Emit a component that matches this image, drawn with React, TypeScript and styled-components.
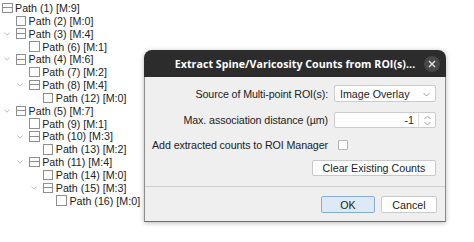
import React from 'react'
import styled, { createGlobalStyle } from 'styled-components'

const GlobalStyle = createGlobalStyle`
  html, body {
    margin: 0;
    padding: 0;
    background: #ffffff;
  }

  body {
    font-family: 'Liberation Sans', Arial, sans-serif;
    font-size: 10.7px;
    color: #222;
    width: 474px;
    height: 242px;
    overflow: hidden;
  }
`

const Page = styled.div`
  position: relative;
  width: 474px;
  height: 242px;
`

const Tree = styled.ul`
  list-style: none;
  margin: 0;
  padding: 1.6px 0 0 2px;
`

const TreeRow = styled.li<{ $level: number }>`
  position: relative;
  display: flex;
  align-items: center;
  gap: 2.5px;
  height: 12.85px;
  padding-left: ${p => p.$level * 13.6}px;
  white-space: nowrap;
`

const Toggle = styled.svg`
  position: absolute;
  top: 4.5px;
  width: 6px;
  height: 4px;
  margin-left: -12px;
`

const NodeBox = styled.span<{ $open: boolean }>`
  position: relative;
  box-sizing: border-box;
  width: 10.5px;
  height: 10.5px;
  border: 1px solid #8e8e8e;
  background: #fff;

  &::after {
    content: '';
    display: ${p => (p.$open ? 'block' : 'none')};
    position: absolute;
    left: 0;
    right: 0;
    top: 3.5px;
    height: 1px;
    background: #8e8e8e;
  }
`

const Dialog = styled.div`
  position: absolute;
  left: 144px;
  top: 50px;
  width: 302px;
  height: 172px;
  display: flex;
  flex-direction: column;
  border-radius: 8px 8px 0 0;
  box-shadow: 0 1px 5px rgba(0, 0, 0, 0.28);
`

const TitleBar = styled.div`
  position: relative;
  height: 27px;
  flex: none;
  display: flex;
  align-items: center;
  justify-content: center;
  background: #2c2c2c;
  border-radius: 8px 8px 0 0;
  color: #fff;
  font-family: 'Open Sans', 'Noto Sans', sans-serif;
  font-weight: 700;
  font-size: 10.6px;
  letter-spacing: 0.05px;
`

const CloseButton = styled.span`
  position: absolute;
  right: 6px;
  top: 6px;
  width: 16px;
  height: 16px;
  border-radius: 50%;
  background: #474747;
  display: flex;
  align-items: center;
  justify-content: center;
`

const Body = styled.div`
  flex: 1;
  display: flex;
  flex-direction: column;
  background: #efefef;
  border: 1px solid #8c8c8c;
  border-top: none;
  border-bottom-color: #6e6e6e;
`

const Form = styled.div`
  display: grid;
  grid-template-columns: 1fr 102px;
  grid-template-rows: 17px 26px 25px 23px;
  column-gap: 6px;
  align-items: end;
  padding: 8px 9px 10px 4px;
  border-bottom: 1px solid #cdcdcd;
`

const Label = styled.span`
  text-align: right;
  white-space: nowrap;
  line-height: 16px;
  letter-spacing: -0.1px;
`

const Field = styled.div<{ $h: number }>`
  box-sizing: border-box;
  height: ${p => p.$h}px;
  display: flex;
  align-items: center;
  background: #fff;
  border: 1px solid #cbcbcb;
  border-radius: 2px;
`

const ComboText = styled.span`
  flex: 1;
  padding-left: 5px;
`

const SpinText = styled.span`
  flex: 1;
  text-align: right;
  padding-right: 4px;
`

const SpinArrows = styled.span`
  width: 16px;
  height: 100%;
  display: flex;
  align-items: center;
  justify-content: center;
  border-left: 1px solid #dcdcdc;
`

const CheckBox = styled.span`
  box-sizing: border-box;
  width: 10px;
  height: 10px;
  margin: 0 0 3px 4px;
  background: #fff;
  border: 1px solid #b4b4b4;
  border-radius: 1px;
`

const Button = styled.button<{ $primary?: boolean; $w: number }>`
  box-sizing: border-box;
  width: ${p => p.$w}px;
  height: 17px;
  padding: 0;
  font-family: 'Liberation Sans', Arial, sans-serif;
  font-size: 10.7px;
  color: #222;
  background: ${p => (p.$primary ? '#dce9f6' : '#fff')};
  border: 1px solid ${p => (p.$primary ? '#86aed4' : '#c9c9c9')};
  border-radius: 2px;
`

const ClearButton = styled(Button)`
  grid-column: 1 / 3;
  justify-self: end;
  height: 16px;
`

const Footer = styled.div`
  display: flex;
  justify-content: flex-end;
  gap: 6px;
  padding: 9px 8px 0 0;
`

interface Node {
  id: number
  marks: number
  level: number
  open?: boolean
}

const nodes: Node[] = [
  { id: 1, marks: 9, level: 0, open: true },
  { id: 2, marks: 0, level: 1 },
  { id: 3, marks: 4, level: 1, open: true },
  { id: 6, marks: 1, level: 2 },
  { id: 4, marks: 6, level: 1, open: true },
  { id: 7, marks: 2, level: 2 },
  { id: 8, marks: 4, level: 2, open: true },
  { id: 12, marks: 0, level: 3 },
  { id: 5, marks: 7, level: 1, open: true },
  { id: 9, marks: 1, level: 2 },
  { id: 10, marks: 3, level: 2, open: true },
  { id: 13, marks: 2, level: 3 },
  { id: 11, marks: 4, level: 2, open: true },
  { id: 14, marks: 0, level: 3 },
  { id: 15, marks: 3, level: 3, open: true },
  { id: 16, marks: 0, level: 4 },
]

const Chevron: React.FC<{ color: string }> = ({ color }) => (
  <svg width="7" height="5" viewBox="0 0 7 5">
    <polyline points="0.5,1 3.5,4 6.5,1" fill="none" stroke={color} strokeWidth="1" />
  </svg>
)

const App: React.FC = () => {
  return (
    <Page>
      <GlobalStyle />
      <Tree>
        {nodes.map(n => (
          <TreeRow key={n.id} $level={n.level}>
            {n.open && n.level > 0 && (
              <Toggle viewBox="0 0 6 4">
                <polyline points="0.5,0.5 3,3.2 5.5,0.5" fill="none" stroke="#bdbdbd" strokeWidth="1" />
              </Toggle>
            )}
            <NodeBox $open={!!n.open} />
            <span>
              Path ({n.id}) [M:{n.marks}]
            </span>
          </TreeRow>
        ))}
      </Tree>

      <Dialog>
        <TitleBar>
          Extract Spine/Varicosity Counts from ROI(s)...
          <CloseButton>
            <svg width="8" height="8" viewBox="0 0 8 8">
              <path d="M1 1 L7 7 M7 1 L1 7" stroke="#e6e6e6" strokeWidth="1.3" />
            </svg>
          </CloseButton>
        </TitleBar>
        <Body>
          <Form>
            <Label>Source of Multi-point ROI(s):</Label>
            <Field $h={17}>
              <ComboText>Image Overlay</ComboText>
              <span style={{ padding: '0 5px 2px 0' }}>
                <Chevron color="#9a9a9a" />
              </span>
            </Field>
            <Label>Max. association distance (µm)</Label>
            <Field $h={16}>
              <SpinText>-1</SpinText>
              <SpinArrows>
                <svg width="7" height="11" viewBox="0 0 7 11">
                  <polyline points="0.5,4 3.5,1 6.5,4" fill="none" stroke="#9a9a9a" strokeWidth="1" />
                  <polyline points="0.5,7 3.5,10 6.5,7" fill="none" stroke="#9a9a9a" strokeWidth="1" />
                </svg>
              </SpinArrows>
            </Field>
            <Label>Add extracted counts to ROI Manager</Label>
            <CheckBox />
            <ClearButton $w={124}>Clear Existing Counts</ClearButton>
          </Form>
          <Footer>
            <Button $primary $w={54}>
              OK
            </Button>
            <Button $w={56}>Cancel</Button>
          </Footer>
        </Body>
      </Dialog>
    </Page>
  )
}

export default App
